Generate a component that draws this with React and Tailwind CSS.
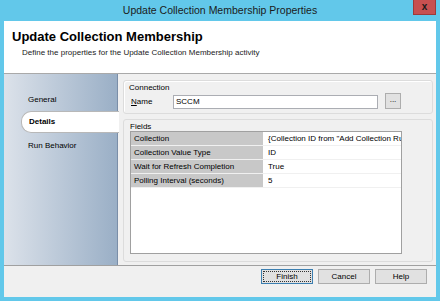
const rows = [
  ["Collection", "{Collection ID from \"Add Collection Rule"],
  ["Collection Value Type", "ID"],
  ["Wait for Refresh Completion", "True"],
  ["Polling Interval (seconds)", "5"],
];

export default function App() {
  return (
    <div
      className="w-[440px] h-[301px] bg-[#62c8ea] flex flex-col text-[#000] overflow-hidden"
      style={{ fontFamily: "Tahoma, 'Liberation Sans', 'DejaVu Sans', sans-serif" }}
    >
      {/* title bar */}
      <div className="relative h-[21px] shrink-0 flex items-center justify-center">
        <span className="text-[10.5px] text-[#1b1b1b] leading-none">Update Collection Membership Properties</span>
        <div className="absolute right-[4px] top-0 w-[23px] h-[15px] bg-[#c75050] border border-[#9d3a3a] border-t-0 flex items-center justify-center">
          <span className="text-[10px] font-bold text-[#1a1a1a] leading-none">x</span>
        </div>
      </div>

      <div className="flex-1 mx-[4px] flex flex-col bg-[#f0f0f0]">
        {/* header */}
        <div className="h-[53px] shrink-0 bg-white border-b border-[#a9a9a9] pl-[8px] pt-[8px]">
          <div className="text-[13px] font-bold leading-[16px]">Update Collection Membership</div>
          <div className="text-[8px] leading-[11px] pl-[10px] mt-[2px] text-[#222]">
            Define the properties for the Update Collection Membership activity
          </div>
        </div>

        {/* body */}
        <div className="h-[192px] shrink-0 flex border-b border-[#a0a0a0]">
          <div className="w-[114px] shrink-0 bg-gradient-to-r from-[#dce2ea] to-[#9aafc6] border-r border-[#7a8ea8] relative text-[8px]">
            <div className="absolute left-[24px] top-[20px]">General</div>
            <div className="absolute left-[17px] top-[37px] w-[98px] h-[22px] bg-white border border-[#b8b8b8] border-r-0 rounded-l-[10px] flex items-center pl-[7px] font-bold">
              Details
            </div>
            <div className="absolute left-[24px] top-[66px]">Run Behavior</div>
          </div>

          <div className="flex-1 flex flex-col pl-[5px] pr-[3px] pt-[6px] gap-[5px] text-[8px]">
            <div className="h-[34px] border border-[#dcdcdc] rounded-[3px] pl-[5px] pr-[31px] pt-[1px] shadow-[inset_1px_1px_0_#fff]">
              <div className="leading-[12px]">Connection</div>
              <div className="flex items-center mt-[1px]">
                <span className="w-[44px] pl-[2px]"><u>N</u>ame</span>
                <div className="w-[205px] h-[14px] bg-white border border-[#abadb3] flex items-center pl-[2px]">SCCM</div>
                <div className="ml-[7px] w-[16px] h-[16px] -mt-[2px] bg-[#e1e1e1] border border-[#adadad] flex items-center justify-center text-[8px] leading-none pb-[2px]">
                  ...
                </div>
              </div>
            </div>

            <div className="h-[143px] border border-[#dcdcdc] rounded-[3px] pl-[6px] pt-[1px] flex flex-col">
              <div className="leading-[12px]">Fields</div>
              <div className="w-[272px] h-[123px] mt-[-2px] bg-white border border-[#a0a0a0] flex flex-col">
                {rows.map(([k, v]) => (
                  <div key={k} className="h-[14px] flex border-b border-[#f0f0f0]">
                    <div className="w-[134px] bg-[#c8c8c8] border-r-[2px] border-white pl-[3px] leading-[14px] whitespace-nowrap overflow-hidden">
                      {k}
                    </div>
                    <div className="flex-1 pl-[3px] leading-[14px] whitespace-nowrap overflow-hidden">{v}</div>
                  </div>
                ))}
              </div>
            </div>
          </div>
        </div>

        {/* footer */}
        <div className="flex-1 flex justify-end items-start pt-[3px] pr-[9px] gap-[5px] text-[8px]">
          <button className="w-[52px] h-[15px] bg-[#e1e1e1] border border-[#3c7fb1] outline outline-1 outline-dotted outline-offset-[-3px] outline-[#333] leading-none">
            Finish
          </button>
          <button className="w-[52px] h-[15px] bg-[#e1e1e1] border border-[#adadad] leading-none">Cancel</button>
          <button className="w-[52px] h-[15px] bg-[#e1e1e1] border border-[#adadad] leading-none">Help</button>
        </div>
      </div>
      <div className="h-[4px] shrink-0" />
    </div>
  );
}
